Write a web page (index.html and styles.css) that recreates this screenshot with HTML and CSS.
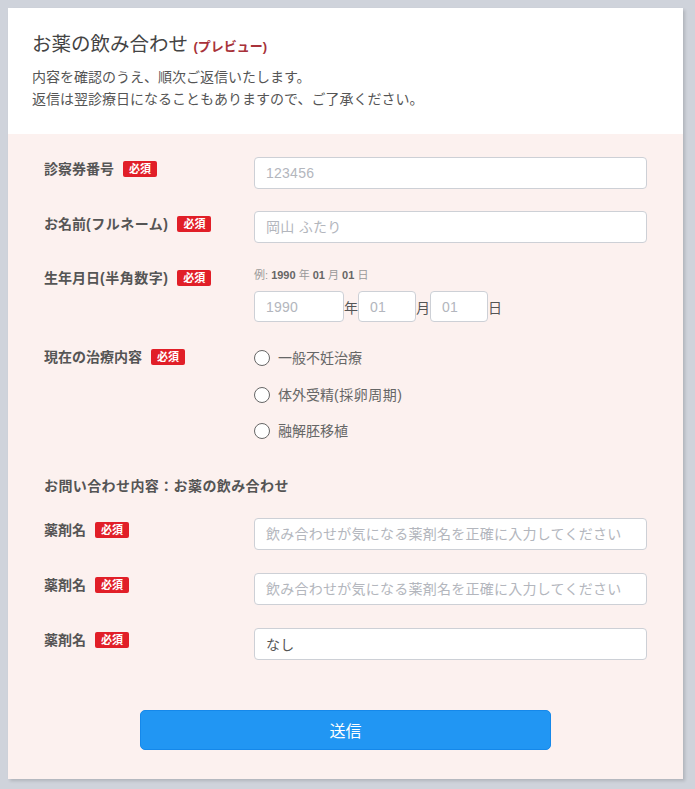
FILE: index.html
```html
<!DOCTYPE html>
<html lang="ja">
<head>
<meta charset="utf-8">
<title>お薬の飲み合わせ</title>
<link rel="stylesheet" href="styles.css">
</head>
<body>
<div class="card">
  <header class="head">
    <h1 class="title">お薬の飲み合わせ <span class="preview">(プレビュー)</span></h1>
    <p class="lead">内容を確認のうえ、順次ご返信いたします。<br>返信は翌診療日になることもありますので、ご了承ください。</p>
  </header>
  <form class="form">
    <div class="row">
      <div class="label">診察券番号<span class="req">必須</span></div>
      <div class="field"><input class="input" type="text" placeholder="123456"></div>
    </div>
    <div class="row">
      <div class="label">お名前<span class="paren">(フルネーム)</span><span class="req">必須</span></div>
      <div class="field"><input class="input" type="text" placeholder="岡山 ふたり"></div>
    </div>
    <div class="row">
      <div class="label">生年月日<span class="paren">(半角数字)</span><span class="req">必須</span></div>
      <div class="field">
        <div class="hint">例: <b>1990</b> 年 <b>01</b> 月 <b>01</b> 日</div>
        <div class="date">
          <input class="input year" type="text" placeholder="1990"><span class="unit">年</span>
          <input class="input md" type="text" placeholder="01"><span class="unit">月</span>
          <input class="input md" type="text" placeholder="01"><span class="unit">日</span>
        </div>
      </div>
    </div>
    <div class="row">
      <div class="label">現在の治療内容<span class="req">必須</span></div>
      <div class="field radios">
        <label class="radio"><input type="radio" name="treat"><span>一般不妊治療</span></label>
        <label class="radio"><input type="radio" name="treat"><span>体外受精<span class="paren">(採卵周期)</span></span></label>
        <label class="radio"><input type="radio" name="treat"><span>融解胚移植</span></label>
      </div>
    </div>
    <h2 class="section">お問い合わせ内容：お薬の飲み合わせ</h2>
    <div class="row drug">
      <div class="label">薬剤名<span class="req">必須</span></div>
      <div class="field"><input class="input" type="text" placeholder="飲み合わせが気になる薬剤名を正確に入力してください"></div>
    </div>
    <div class="row drug">
      <div class="label">薬剤名<span class="req">必須</span></div>
      <div class="field"><input class="input" type="text" placeholder="飲み合わせが気になる薬剤名を正確に入力してください"></div>
    </div>
    <div class="row drug">
      <div class="label">薬剤名<span class="req">必須</span></div>
      <div class="field"><input class="input" type="text" value="なし"></div>
    </div>
    <div class="actions"><button class="submit" type="button">送信</button></div>
  </form>
</div>
</body>
</html>
```
FILE: styles.css
```css
html, body {
  margin: 0;
  padding: 0;
  background: #cfd3db;
}
body {
  padding: 8px 12px 11px 8px;
  font-family: "Liberation Sans", "Noto Sans CJK JP", sans-serif;
  color: #555;
}
.card {
  width: 675px;
  background: #fcf1ef;
  box-shadow: 2px 2px 3px rgba(0, 0, 0, 0.15);
}
.head {
  background: #fff;
  padding: 23px 24px 24px;
}
.title {
  margin: 0;
  height: 26px;
  font-size: 19.5px;
  line-height: 26px;
  font-weight: normal;
  color: #444;
  white-space: nowrap;
}
.preview {
  font-size: 13px;
  font-weight: bold;
  color: #a8323a;
}
.lead {
  margin: 9px 0 0;
  height: 44px;
  font-size: 14px;
  line-height: 22px;
  color: #555;
}
.form {
  padding: 23px 36px 29px;
}
.row {
  display: grid;
  grid-template-columns: 210px 1fr;
  align-items: start;
  margin-bottom: 22px;
}
.row.drug {
  margin-bottom: 23px;
}
.label {
  display: flex;
  align-items: center;
  height: 20px;
  font-size: 14px;
  font-weight: bold;
  line-height: 20px;
  padding-top: 3px;
  color: #555;
  white-space: nowrap;
}
.row.drug .label,
.row:first-child .label {
  padding-top: 2px;
}
.paren {
  letter-spacing: 0.5px;
}
.req {
  display: inline-block;
  margin-left: 9px;
  background: #e11f28;
  color: #fff;
  font-size: 11px;
  line-height: 16px;
  height: 16px;
  padding: 0 6px;
  border-radius: 2px;
  font-weight: bold;
  letter-spacing: 0;
}
.input {
  box-sizing: border-box;
  display: block;
  width: 100%;
  height: 32px;
  border: 1px solid #cdd0d6;
  border-radius: 4px;
  background: #fff;
  padding: 0 11px;
  font-family: "Liberation Sans", "Noto Sans CJK JP", sans-serif;
  font-size: 14px;
  letter-spacing: 0.25px;
  color: #555;
  outline: none;
}
.input::placeholder {
  color: #b3b6bd;
}
.hint {
  height: 20px;
  font-size: 11px;
  line-height: 20px;
  color: #999;
  margin-bottom: 6px;
}
.hint b {
  color: #666;
}
.date {
  display: flex;
  align-items: center;
}
.date .input {
  height: 31px;
}
.year {
  width: 90px;
}
.md {
  width: 58px;
}
.unit {
  font-size: 14px;
  color: #555;
  width: 14px;
  text-align: center;
}
.radios {
  display: flex;
  flex-direction: column;
  gap: 16.5px;
  padding-top: 4px;
}
.radio {
  display: flex;
  align-items: center;
  gap: 8px;
  height: 20px;
  font-size: 14px;
  line-height: 20px;
  color: #666;
}
.radio input {
  appearance: none;
  margin: 0;
  width: 16px;
  height: 16px;
  border: 1.5px solid #666;
  border-radius: 50%;
  background: #fff;
  box-sizing: border-box;
}
.section {
  margin: 35px 0 22px;
  height: 20px;
  font-size: 14px;
  line-height: 20px;
  font-weight: bold;
  letter-spacing: 0.4px;
  color: #555;
}
.actions {
  display: flex;
  justify-content: center;
  padding-top: 27px;
}
.submit {
  width: 411px;
  height: 40px;
  background: #2196f3;
  border: 1px solid #1588ea;
  border-radius: 5px;
  color: #fff;
  font-family: "Liberation Sans", "Noto Sans CJK JP", sans-serif;
  font-size: 16px;
}
```
